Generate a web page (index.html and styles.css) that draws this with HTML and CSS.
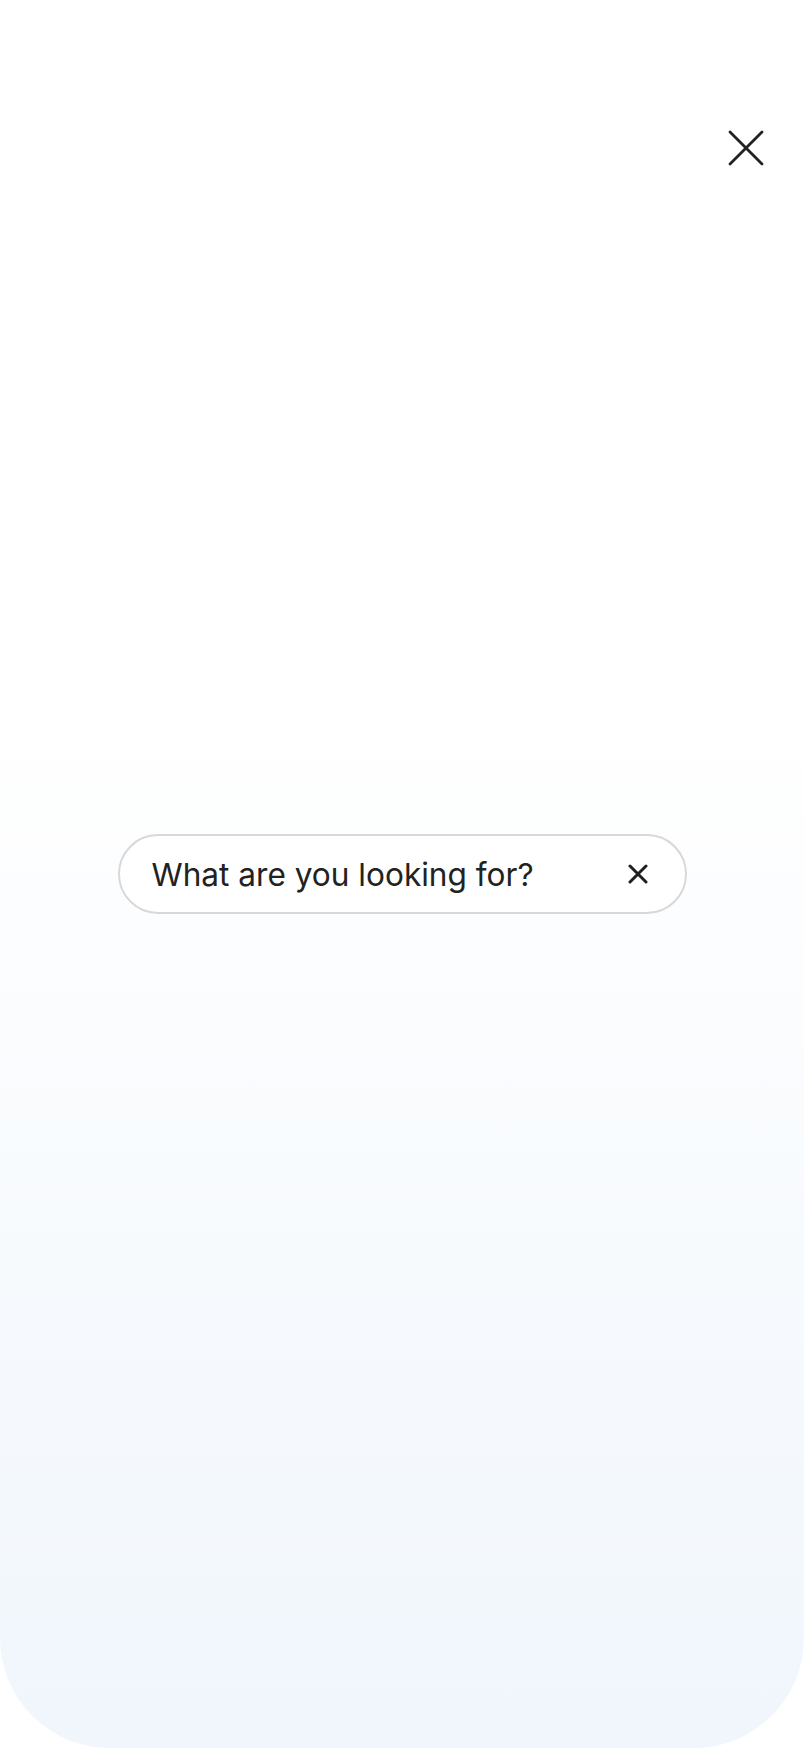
FILE: index.html
```html
<!DOCTYPE html>
<html lang="en">
<head>
<meta charset="utf-8">
<title>Search</title>
<link rel="stylesheet" href="styles.css">
</head>
<body>
<div class="sheet">
  <header class="top">
    <button class="close" aria-label="Close">
      <svg width="36" height="36" viewBox="0 0 36 36" aria-hidden="true">
        <path d="M2 2 L34 34 M34 2 L2 34" stroke="#222" stroke-width="2.8" stroke-linecap="round" fill="none"/>
      </svg>
    </button>
  </header>
  <main class="center">
    <div class="search">
      <span class="placeholder">What are you looking for?</span>
      <button class="clear" aria-label="Clear">
        <svg width="20" height="20" viewBox="0 0 20 20" aria-hidden="true">
          <path d="M2 2 L18 18 M18 2 L2 18" stroke="#1f1f1f" stroke-width="3" stroke-linecap="round" fill="none"/>
        </svg>
      </button>
    </div>
  </main>
  <div class="bottom"></div>
</div>
</body>
</html>
```

FILE: styles.css
```css
html, body {
  margin: 0;
  padding: 0;
  background: #ffffff;
}

.sheet {
  height: 1748px;
  display: grid;
  grid-template-rows: 1fr auto 1fr;
  background: linear-gradient(to bottom, #ffffff 0%, #ffffff 40%, #f0f6fc 100%);
  border-radius: 0 0 110px 110px;
  font-family: Inter, "Noto Sans", sans-serif;
}

.top {
  display: flex;
  justify-content: flex-end;
  align-items: flex-start;
  padding: 130px 40px 0 0;
}

.close, .clear {
  border: 0;
  background: none;
  padding: 0;
  margin: 0;
  display: block;
  cursor: pointer;
}

.close svg, .clear svg {
  display: block;
}

.center {
  display: flex;
  justify-content: center;
}

.search {
  box-sizing: border-box;
  width: 569px;
  height: 80px;
  border: 2px solid #d8d8d8;
  border-radius: 40px;
  background: #ffffff;
  display: flex;
  align-items: center;
  justify-content: space-between;
  padding: 0 37px 0 32px;
}

.placeholder {
  font-size: 31.6px;
  color: #222222;
  letter-spacing: 0;
}
```
